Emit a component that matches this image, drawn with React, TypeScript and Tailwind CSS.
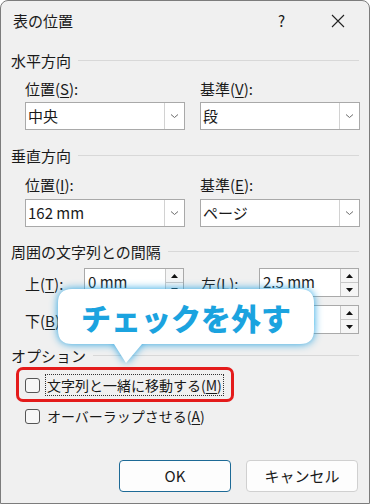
import React from "react";

const font = { fontFamily: '"Noto Sans CJK JP", "Noto Sans", sans-serif' };

const SectionHeader = ({ title, className }: { title: string; className: string }) => (
  <div className={`flex items-center h-[20px] pl-[10px] pr-[10px] ${className}`}>
    <span className="text-[15px] text-[#1a1a1a] leading-none">{title}</span>
    <div className="flex-1 ml-[7px] h-px bg-[#d8d8d8]" />
  </div>
);

const Label = ({ text, keyChar }: { text: string; keyChar: string }) => (
  <span className="text-[15px] text-[#1a1a1a] leading-none whitespace-nowrap">
    {text}(<span className="underline underline-offset-2">{keyChar}</span>):
  </span>
);

const Select = ({ value }: { value: string }) => (
  <div className="flex h-[28px] w-[160px] bg-white border border-[#a9a9a9]">
    <div className="flex-1 flex items-center pl-[2px] text-[15px] text-[#1a1a1a]">{value}</div>
    <div className="w-[20px] border-l border-[#d2d2d2] flex items-center justify-center">
      <svg width="9" height="6" viewBox="0 0 9 6">
        <path d="M1 1.5 L4.5 4.5 L8 1.5" fill="none" stroke="#6b6b6b" strokeWidth="1" />
      </svg>
    </div>
  </div>
);

const Spinner = ({ value }: { value: string }) => (
  <div className="flex h-[29px] w-[100px] bg-white border border-[#a9a9a9]">
    <div className="flex-1 flex items-center pl-[3px] text-[15px] text-[#1a1a1a]">{value}</div>
    <div className="w-[18px] flex flex-col border-l border-[#c8c8c8]">
      <div className="flex-1 flex items-center justify-center bg-[#f5f5f5] border-b border-[#c8c8c8]">
        <svg width="7" height="4" viewBox="0 0 7 4">
          <path d="M0 4 L3.5 0 L7 4 Z" fill="#111" />
        </svg>
      </div>
      <div className="flex-1 flex items-center justify-center bg-[#f5f5f5]">
        <svg width="7" height="4" viewBox="0 0 7 4">
          <path d="M0 0 L3.5 4 L7 0 Z" fill="#111" />
        </svg>
      </div>
    </div>
  </div>
);

const Checkbox = ({ children, focused }: { children: React.ReactNode; focused?: boolean }) => (
  <div className="flex items-center h-[24px] pl-[24px]">
    <div className="w-[15px] h-[15px] rounded-[3px] border border-[#555] bg-[#f7f7f7]" />
    <span
      className={`ml-[6px] px-[1px] text-[14px] text-[#1a1a1a] leading-[20px] ${
        focused ? "outline outline-1 outline-dotted outline-[#333]" : ""
      }`}
    >
      {children}
    </span>
  </div>
);

export default function App() {
  return (
    <div
      className="relative w-[370px] h-[504px] bg-[#f0f0f0] border border-[#7c7c7c] rounded-t-[8px] overflow-hidden"
      style={font}
    >
      {/* Title bar */}
      <div className="flex items-center h-[40px] pl-[12px]">
        <span className="text-[15px] text-[#1a1a1a]">表の位置</span>
        <span className="ml-auto mr-[46px] text-[15px] text-[#1a1a1a]">?</span>
        <svg className="mr-[24px]" width="14" height="14" viewBox="0 0 14 14">
          <path d="M1 1 L13 13 M13 1 L1 13" stroke="#222" strokeWidth="1.1" />
        </svg>
      </div>

      <SectionHeader title="水平方向" className="mt-[9px]" />
      <div className="grid grid-cols-[160px_160px] gap-x-[15px] pl-[24px] mt-[8px]">
        <div className="h-[20px] flex items-center"><Label text="位置" keyChar="S" /></div>
        <div className="h-[20px] flex items-center"><Label text="基準" keyChar="V" /></div>
        <div className="mt-[4px]"><Select value="中央" /></div>
        <div className="mt-[4px]"><Select value="段" /></div>
      </div>

      <SectionHeader title="垂直方向" className="mt-[15px]" />
      <div className="grid grid-cols-[160px_160px] gap-x-[15px] pl-[24px] mt-[9px]">
        <div className="h-[20px] flex items-center"><Label text="位置" keyChar="I" /></div>
        <div className="h-[20px] flex items-center"><Label text="基準" keyChar="E" /></div>
        <div className="mt-[5px]"><Select value="162 mm" /></div>
        <div className="mt-[5px]"><Select value="ページ" /></div>
      </div>

      <SectionHeader title="周囲の文字列との間隔" className="mt-[14px]" />
      <div className="flex flex-col gap-[8px] pl-[24px] mt-[7px]">
        <div className="flex items-center">
          <div className="w-[59px]"><Label text="上" keyChar="T" /></div>
          <Spinner value="0 mm" />
          <div className="w-[58px] ml-[17px]"><Label text="左" keyChar="L" /></div>
          <Spinner value="2.5 mm" />
        </div>
        <div className="flex items-center">
          <div className="w-[59px]"><Label text="下" keyChar="B" /></div>
          <Spinner value="0 mm" />
          <div className="w-[58px] ml-[17px]"><Label text="右" keyChar="R" /></div>
          <Spinner value="2.5 mm" />
        </div>
      </div>

      <SectionHeader title="オプション" className="mt-[11px]" />
      <div className="flex flex-col gap-[7px] mt-[8px]">
        <Checkbox focused>
          文字列と一緒に移動する(<span className="underline underline-offset-2">M</span>)
        </Checkbox>
        <Checkbox>
          オーバーラップさせる(<span className="underline underline-offset-2">A</span>)
        </Checkbox>
      </div>

      <div className="flex justify-end gap-[15px] pr-[11px] mt-[32px]">
        <button className="w-[112px] h-[32px] rounded-[4px] bg-[#fdfdfd] border border-[#1d6a96] text-[15px] text-[#1a1a1a]">
          OK
        </button>
        <button className="w-[112px] h-[32px] rounded-[4px] bg-[#fdfdfd] border border-[#d0d0d0] text-[15px] text-[#1a1a1a]">
          キャンセル
        </button>
      </div>

      {/* Red highlight around the first option */}
      <div className="absolute left-[15px] top-[366px] w-[218px] h-[35px] rounded-[7px] border-[3px] border-[#e41b1b]" />

      {/* Callout */}
      <div className="absolute left-[57px] top-[288px] w-[256px] h-[75px]">
        <svg
          className="absolute inset-0 overflow-visible drop-shadow-[0_0_4px_rgba(30,160,225,1)]"
          width="256"
          height="75"
          viewBox="0 0 256 75"
        >
          <path
            d="M14 0 H242 Q256 0 256 14 V41 Q256 55 242 55 H84 L68 74 L56 55 H14 Q0 55 0 41 V14 Q0 0 14 0 Z"
            fill="#ffffff"
          />
        </svg>
        <div className="absolute left-0 top-0 w-[256px] h-[55px] flex items-center justify-center">
          <span className="text-[30px] font-black text-[#1ba3df] leading-none">
            チェックを外す
          </span>
        </div>
      </div>
    </div>
  );
}
